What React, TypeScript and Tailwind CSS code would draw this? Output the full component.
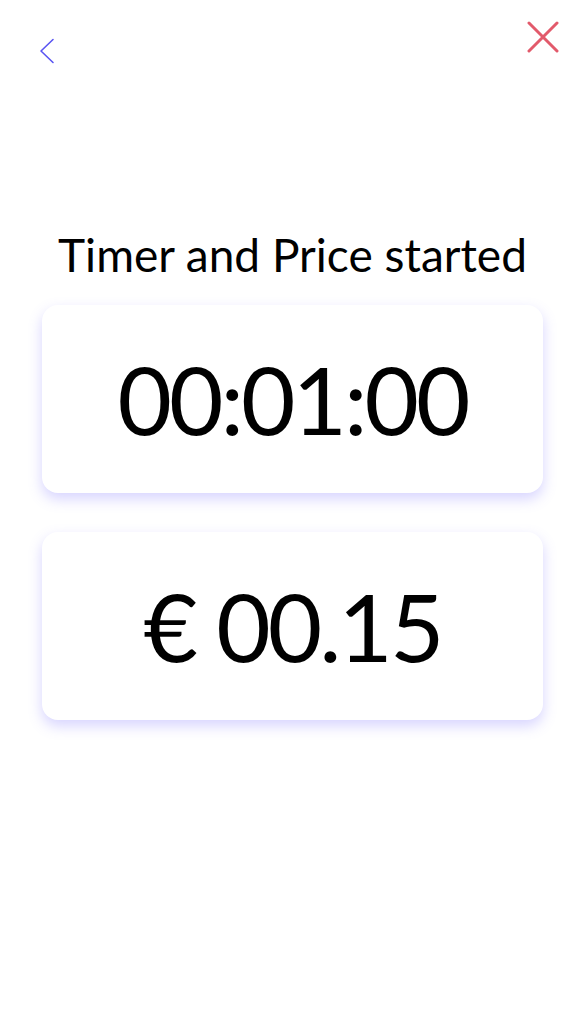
import React from 'react';

const App: React.FC = () => {
  return (
    <div className="min-h-screen w-full bg-white flex flex-col" style={{ fontFamily: 'Lato, "Open Sans", sans-serif' }}>
      <div className="flex justify-between items-start pl-[38px] pr-[17px] pt-[21px] h-[230px]">
        <button className="mt-[17px] text-[#5a55f2]">
          <svg width="18" height="26" viewBox="0 0 18 26" fill="none">
            <path d="M15 1.5L3 13l12 11.5" stroke="currentColor" strokeWidth="1.6" strokeLinecap="round" strokeLinejoin="round" />
          </svg>
        </button>
        <button className="text-[#e25a6b]">
          <svg width="32" height="32" viewBox="0 0 32 32" fill="none">
            <path d="M2 2l28 28M30 2L2 30" stroke="currentColor" strokeWidth="3" strokeLinecap="round" />
          </svg>
        </button>
      </div>

      <div className="pl-[42px] pr-[33px]">
        <h1 className="text-center text-[46px] leading-[50px] text-black">Timer and Price started</h1>
      </div>

      <div className="flex flex-col gap-[39px] pl-[42px] pr-[33px] pt-[25px]">
        <div className="h-[188px] rounded-[16px] bg-white flex items-center justify-center shadow-[0_6px_14px_rgba(110,100,255,0.28)]">
          <span className="text-[94px] leading-none tracking-[-3px] text-black">00:01:00</span>
        </div>
        <div className="h-[188px] rounded-[16px] bg-white flex items-center justify-center shadow-[0_6px_14px_rgba(110,100,255,0.28)]">
          <span className="text-[94px] leading-none tracking-[-3px] text-black">€ 00.15</span>
        </div>
      </div>
    </div>
  );
};

export default App;
